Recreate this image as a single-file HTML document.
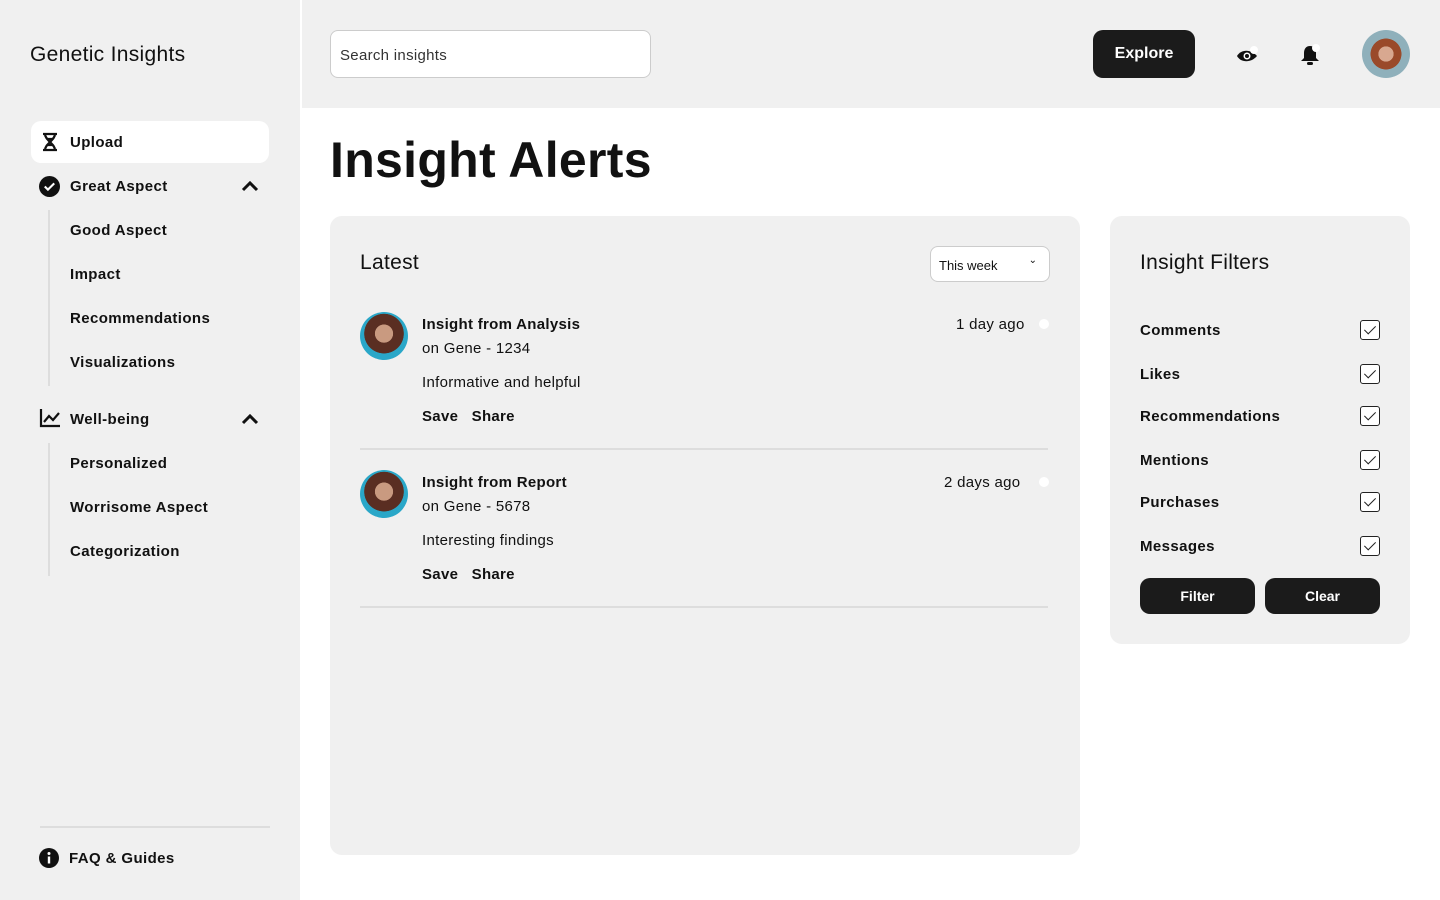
<!DOCTYPE html>
<html><head><meta charset="utf-8"><style>
*{box-sizing:border-box;margin:0;padding:0}
body{width:1440px;height:900px;background:#fff;font-family:"Liberation Sans",sans-serif;color:#111;position:relative;overflow:hidden}
.abs{position:absolute}
.side{left:0;top:0;width:300px;height:900px;background:#f0f0f0}
.hdr{left:302px;top:0;width:1138px;height:108px;background:#f0f0f0}
.b{font-weight:bold;font-size:15px;letter-spacing:0.3px}
.item{position:absolute;font-weight:bold;font-size:15px;letter-spacing:0.4px}
.t{letter-spacing:0.3px}
.card{background:#f0f0f0;border-radius:12px}
.btn{background:#1b1b1b;color:#fff;font-weight:bold;border-radius:10px;display:flex;align-items:center;justify-content:center}
.cb{position:absolute;left:1360px;width:20px;height:20px;border:1.5px solid #222;border-radius:3px;background:#fff}
.cb:after{content:"";position:absolute;left:6px;top:2px;width:5px;height:10px;border:solid #222;border-width:0 1.5px 1.5px 0;transform:rotate(45deg)}
.av{border-radius:50%;background:radial-gradient(circle at 50% 45%,#c99a80 0 25%,#5a2e22 26% 55%,#2aa7c8 56%)}
</style></head><body>
<div class="abs side"></div>
<div class="abs hdr"></div>
<div class="abs t" style="left:30px;top:43px;font-size:21px">Genetic Insights</div>
<div class="abs" style="left:31px;top:121px;width:238px;height:42px;background:#fff;border-radius:10px"></div>
<svg class="abs" style="left:40px;top:132px" width="20" height="20" viewBox="0 0 20 20"><path d="M3 2h14M3 18h14M5 2c0 6 10 10 10 16M15 2c0 6-10 10-10 16M7 7h6M7 13h6" stroke="#111" stroke-width="2.2" fill="none"/></svg>
<div class="item" style="left:70px;top:134px">Upload</div>
<svg class="abs" style="left:39px;top:176px" width="21" height="21" viewBox="0 0 20 20"><circle cx="10" cy="10" r="10" fill="#111"/><path d="M5.5 10l3 3 6-6" stroke="#fff" stroke-width="2" fill="none"/></svg>
<div class="item" style="left:70px;top:178px">Great Aspect</div>
<svg class="abs" style="left:241px;top:180px" width="18" height="12" viewBox="0 0 18 12"><path d="M2 10l7-7 7 7" stroke="#111" stroke-width="3" fill="none"/></svg>
<div class="abs" style="left:48px;top:210px;width:2px;height:176px;background:#ddd"></div>
<div class="item" style="left:70px;top:222px">Good Aspect</div>
<div class="item" style="left:70px;top:266px">Impact</div>
<div class="item" style="left:70px;top:310px">Recommendations</div>
<div class="item" style="left:70px;top:354px">Visualizations</div>
<svg class="abs" style="left:39px;top:408px" width="22" height="20" viewBox="0 0 22 20"><path d="M2 1v17h19M5 14l5-6 4 4 6-7" stroke="#111" stroke-width="2.2" fill="none"/></svg>
<div class="item" style="left:70px;top:411px">Well-being</div>
<svg class="abs" style="left:241px;top:413px" width="18" height="12" viewBox="0 0 18 12"><path d="M2 10l7-7 7 7" stroke="#111" stroke-width="3" fill="none"/></svg>
<div class="abs" style="left:48px;top:443px;width:2px;height:133px;background:#ddd"></div>
<div class="item" style="left:70px;top:455px">Personalized</div>
<div class="item" style="left:70px;top:499px">Worrisome Aspect</div>
<div class="item" style="left:70px;top:543px">Categorization</div>
<div class="abs" style="left:40px;top:826px;width:230px;height:2px;background:#ddd"></div>
<svg class="abs" style="left:39px;top:848px" width="20" height="20" viewBox="0 0 20 20"><circle cx="10" cy="10" r="10" fill="#111"/><rect x="8.8" y="8.5" width="2.4" height="7" fill="#fff"/><circle cx="10" cy="5.5" r="1.5" fill="#fff"/></svg>
<div class="item" style="left:69px;top:850px">FAQ &amp; Guides</div>

<div class="abs t" style="left:330px;top:30px;width:321px;height:48px;background:#fff;border:1px solid #ccc;border-radius:8px;padding:16px 9px;font-size:15px;color:#333">Search insights</div>
<div class="abs btn" style="left:1093px;top:30px;width:102px;height:48px;font-size:16px">Explore</div>
<svg class="abs" style="left:1236px;top:44px" width="24" height="22" viewBox="0 0 24 22"><path d="M1 12c4-7 14-7 20 0c-6 7-16 7-20 0z" fill="#111"/><circle cx="11" cy="12" r="3.5" fill="#fff"/><circle cx="11" cy="12" r="2" fill="#111"/><circle cx="18" cy="6" r="4" fill="#fff"/></svg>
<svg class="abs" style="left:1298px;top:42px" width="24" height="26" viewBox="0 0 24 26"><path d="M12 4c-4 0-6 3-6 7v5l-3 3h18l-3-3v-5c0-4-2-7-6-7z" fill="#111"/><rect x="9" y="20" width="6" height="3" rx="1.5" fill="#111"/><circle cx="18" cy="6" r="4" fill="#fff"/></svg>
<div class="abs" style="left:1362px;top:30px;width:48px;height:48px;border-radius:50%;background:radial-gradient(circle at 50% 50%,#d8a890 0 22%,#9a4a2a 23% 45%,#8fb0bb 46%)"></div>

<div class="abs" style="left:330px;top:131px;font-size:50px;font-weight:bold;letter-spacing:0.3px">Insight Alerts</div>

<div class="abs card" style="left:330px;top:216px;width:750px;height:639px"></div>
<div class="abs t" style="left:360px;top:251px;font-size:21px">Latest</div>
<div class="abs" style="left:930px;top:246px;width:120px;height:36px;background:#fff;border:1px solid #ccc;border-radius:8px;font-size:13px;padding:11px 8px">This week<span style="position:absolute;right:12px;top:8px;font-size:10px">&#8964;</span></div>

<div class="abs av" style="left:360px;top:312px;width:48px;height:48px"></div>
<div class="abs b" style="left:422px;top:316px">Insight from Analysis</div>
<div class="abs t" style="left:422px;top:340px;font-size:15px">on Gene - 1234</div>
<div class="abs t" style="left:956px;top:316px;font-size:15px">1 day ago</div>
<div class="abs" style="left:1039px;top:319px;width:10px;height:10px;border-radius:50%;background:#fff"></div>
<div class="abs t" style="left:422px;top:374px;font-size:15px">Informative and helpful</div>
<div class="abs b" style="left:422px;top:408px">Save&nbsp;&nbsp; Share</div>
<div class="abs" style="left:360px;top:448px;width:688px;height:2px;background:#ddd"></div>

<div class="abs av" style="left:360px;top:470px;width:48px;height:48px"></div>
<div class="abs b" style="left:422px;top:474px">Insight from Report</div>
<div class="abs t" style="left:422px;top:498px;font-size:15px">on Gene - 5678</div>
<div class="abs t" style="left:944px;top:474px;font-size:15px">2 days ago</div>
<div class="abs" style="left:1039px;top:477px;width:10px;height:10px;border-radius:50%;background:#fff"></div>
<div class="abs t" style="left:422px;top:532px;font-size:15px">Interesting findings</div>
<div class="abs b" style="left:422px;top:566px">Save&nbsp;&nbsp; Share</div>
<div class="abs" style="left:360px;top:606px;width:688px;height:2px;background:#ddd"></div>

<div class="abs card" style="left:1110px;top:216px;width:300px;height:428px"></div>
<div class="abs t" style="left:1140px;top:251px;font-size:21px">Insight Filters</div>
<div class="item" style="left:1140px;top:322px">Comments</div><div class="cb" style="top:320px"></div>
<div class="item" style="left:1140px;top:366px">Likes</div><div class="cb" style="top:364px"></div>
<div class="item" style="left:1140px;top:408px">Recommendations</div><div class="cb" style="top:406px"></div>
<div class="item" style="left:1140px;top:452px">Mentions</div><div class="cb" style="top:450px"></div>
<div class="item" style="left:1140px;top:494px">Purchases</div><div class="cb" style="top:492px"></div>
<div class="item" style="left:1140px;top:538px">Messages</div><div class="cb" style="top:536px"></div>
<div class="abs btn" style="left:1140px;top:578px;width:115px;height:36px;font-size:14px">Filter</div>
<div class="abs btn" style="left:1265px;top:578px;width:115px;height:36px;font-size:14px">Clear</div>
</body></html>
